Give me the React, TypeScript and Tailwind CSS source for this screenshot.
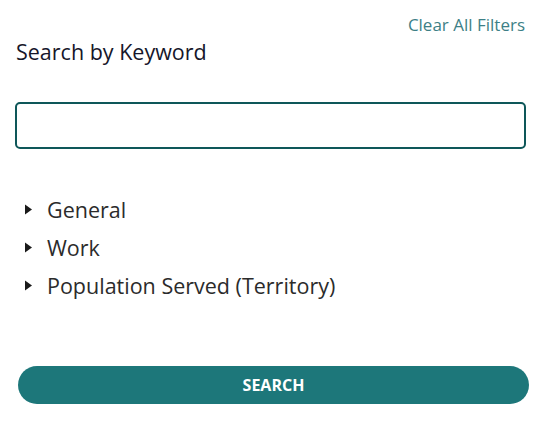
import { useState } from 'react';

const Caret = () => (
  <svg width="7" height="11" viewBox="0 0 7 11" className="shrink-0 -mt-[2px]">
    <path d="M0 0.5 L7 5.5 L0 10.5 Z" fill="#1a1a1a" />
  </svg>
);

const FILTERS = ['General', 'Work', 'Population Served (Territory)'];

const App = () => {
  const [keyword, setKeyword] = useState('');

  return (
    <div className="w-[545px] h-[428px] bg-white font-['Open_Sans',sans-serif] px-[15px] pt-[13px]">
      <div className="flex justify-end pr-[5px]">
        <button className="text-[17px] leading-[24px] text-[#3d7f86]">Clear All Filters</button>
      </div>
      <h2 className="text-[21.5px] leading-[30px] text-[#16162a] pl-[1px]">Search by Keyword</h2>
      <input
        value={keyword}
        onChange={(e) => setKeyword(e.target.value)}
        className="mt-[35px] block w-[511px] h-[47px] border-2 border-[#0e5759] rounded-[5px] px-3 outline-none"
      />
      <ul className="mt-[46px] flex flex-col gap-[8px] pl-[10px]">
        {FILTERS.map((f) => (
          <li key={f} className="flex items-center gap-[15px] text-[21.5px] leading-[30px] text-[#2b2b2b]">
            <Caret />
            {f}
          </li>
        ))}
      </ul>
      <button className="mt-[65px] ml-[3px] block w-[511px] h-[38px] rounded-full bg-[#1d777a] text-white text-[16px] font-bold">
        SEARCH
      </button>
    </div>
  );
};

export default App;
